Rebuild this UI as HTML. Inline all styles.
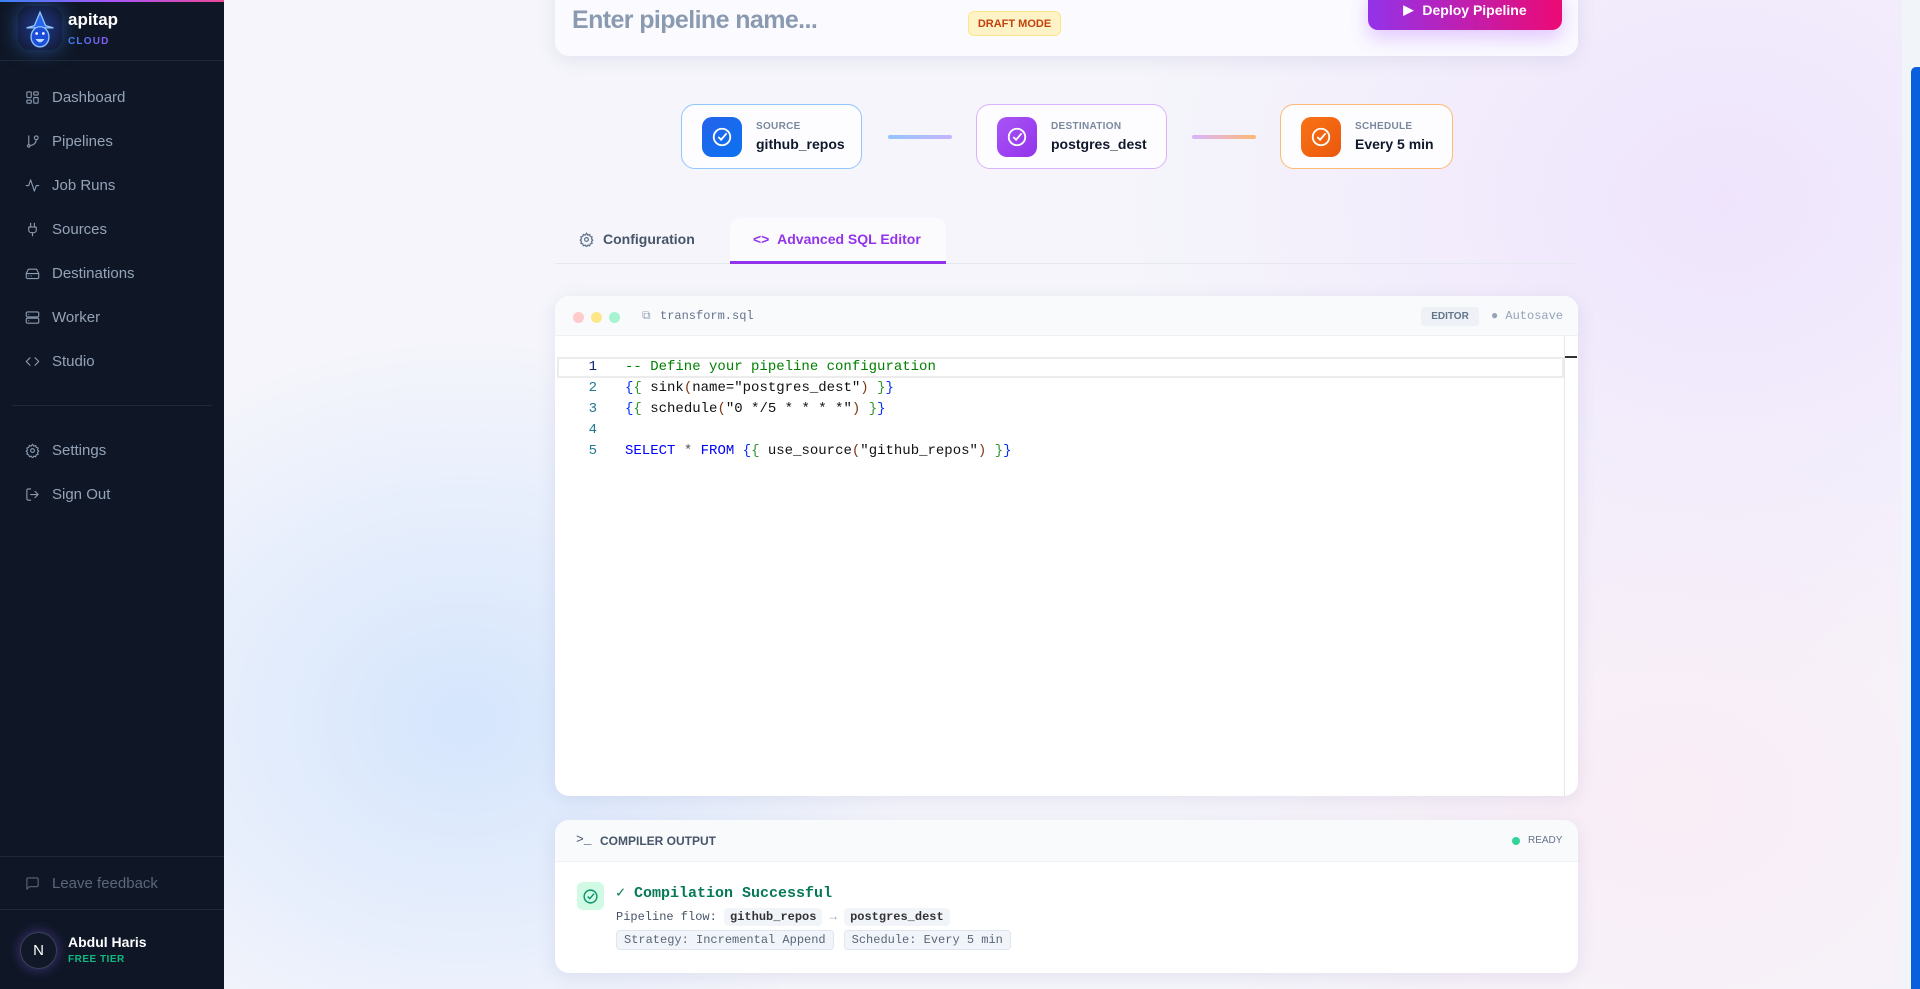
<!DOCTYPE html>
<html><head><meta charset="utf-8"><style>
*{box-sizing:border-box;margin:0;padding:0}
body{width:1920px;height:989px;overflow:hidden;font-family:"Liberation Sans",sans-serif;background:#f4f4fb;position:relative}
.sb{position:absolute;left:0;top:0;width:224px;height:989px;background:#0f1726;color:#8d9bb0}
.sb .topbar{position:absolute;left:0;top:0;width:224px;height:2px;background:linear-gradient(90deg,#3b82f6,#a855f7,#ec4899)}
.nav{position:absolute;left:25px;font-size:15px;color:#94a3b8;display:flex;align-items:center;height:20px}
.nav svg{width:15px;height:15px;margin-right:12px;stroke:#8d9bb0;fill:none;stroke-width:1.8;stroke-linecap:round;stroke-linejoin:round}
.main{position:absolute;left:224px;top:0;width:1678px;height:989px;background:radial-gradient(ellipse 450px 380px at 240px 720px,rgba(191,219,254,.6),transparent),radial-gradient(ellipse 600px 500px at 1500px 200px,rgba(237,224,252,.8),transparent),radial-gradient(ellipse 500px 400px at 1450px 800px,rgba(252,231,243,.6),transparent),#f5f5fb}
.card{position:absolute;background:#fff;border-radius:14px;box-shadow:0 4px 18px rgba(100,100,160,.12)}
.node{position:absolute;top:104px;height:65px;border-radius:14px;background:#fdfdff;display:flex;align-items:center;padding-left:20px}
.node .ic{width:40px;height:40px;border-radius:10px;display:flex;align-items:center;justify-content:center;margin-right:14px}
.node .l{font-size:10px;font-weight:bold;color:#7a889e;letter-spacing:.3px}
.node .v{font-size:14px;font-weight:bold;color:#0f172a;margin-top:4px}
.mono{font-family:"Liberation Mono",monospace}
.code{position:absolute;left:625px;font-size:14px;white-space:pre;color:#111}
.ln{position:absolute;left:560px;width:37px;text-align:right;font-size:14px;color:#237893}
.chip{display:inline-block;background:#f1f5f9;border-radius:4px;padding:2px 6px;font-weight:bold;color:#333}
.chip2{display:inline-block;background:#f1f5f9;border:1px solid #dfe5ee;border-radius:4px;padding:2px 7px;color:#5a6678;margin-right:10px}
</style></head><body>
<div class="sb">
<div class="topbar"></div>
<div style="position:absolute;left:18px;top:6px;width:44px;height:44px;border-radius:12px;background:radial-gradient(circle,#1e3a8a 0%,#172554 60%,#0f1726 100%);box-shadow:0 0 18px rgba(59,130,246,.5)"></div>
<svg style="position:absolute;left:22px;top:10px" width="36" height="38" viewBox="0 0 32 34"><path d="M16 2 L21 14 L28 16 L4 16 L11 14 Z" fill="#2563eb" stroke="#93c5fd" stroke-width="1.2"/><ellipse cx="16" cy="24" rx="8" ry="9" fill="#1d4ed8" stroke="#93c5fd" stroke-width="1.2"/><circle cx="13" cy="21" r="1.2" fill="#fff"/><circle cx="19" cy="21" r="1.2" fill="#fff"/><path d="M12 26 Q16 32 20 26" fill="#bfdbfe"/></svg>
<div style="position:absolute;left:68px;top:10px;color:#fff;font-weight:bold;font-size:17px">apitap</div>
<div style="position:absolute;left:68px;top:36px;font-weight:bold;font-size:10px;letter-spacing:1.2px;background:linear-gradient(90deg,#3b82f6,#8b5cf6);-webkit-background-clip:text;color:transparent">CLOUD</div>
<div style="position:absolute;left:0;top:60px;width:224px;height:1px;background:#1e293b"></div>
<div class="nav" style="top:87px"><svg viewBox="0 0 24 24"><rect x="3" y="3" width="7" height="9" rx="1"/><rect x="14" y="3" width="7" height="5" rx="1"/><rect x="14" y="12" width="7" height="9" rx="1"/><rect x="3" y="16" width="7" height="5" rx="1"/></svg>Dashboard</div>
<div class="nav" style="top:131px"><svg viewBox="0 0 24 24"><circle cx="6" cy="19" r="2"/><circle cx="18" cy="6" r="3"/><path d="M6 3v14M18 9a9 9 0 0 1-9 9"/></svg>Pipelines</div>
<div class="nav" style="top:175px"><svg viewBox="0 0 24 24"><path d="M22 12h-4l-3 9L9 3l-3 9H2"/></svg>Job Runs</div>
<div class="nav" style="top:219px"><svg viewBox="0 0 24 24"><path d="M12 22v-5M9 8V2M15 8V2M18 8v5a4 4 0 0 1-4 4h-4a4 4 0 0 1-4-4V8z"/></svg>Sources</div>
<div class="nav" style="top:263px"><svg viewBox="0 0 24 24"><path d="M22 12H2M5.5 5h13L22 12v6a2 2 0 0 1-2 2H4a2 2 0 0 1-2-2v-6z"/><path d="M6 16h.01M10 16h.01"/></svg>Destinations</div>
<div class="nav" style="top:307px"><svg viewBox="0 0 24 24"><rect x="2" y="3" width="20" height="8" rx="2"/><rect x="2" y="13" width="20" height="8" rx="2"/><path d="M6 7h.01M6 17h.01"/></svg>Worker</div>
<div class="nav" style="top:351px"><svg viewBox="0 0 24 24"><path d="M16 18l6-6-6-6M8 6l-6 6 6 6"/></svg>Studio</div>
<div style="position:absolute;left:12px;top:405px;width:200px;height:1px;background:#1e293b"></div>
<div class="nav" style="top:440px"><svg viewBox="0 0 24 24"><circle cx="12" cy="12" r="3"/><path d="M12 2l2 3 3-1 1 3 3 1-1 3 2 2-2 2 1 3-3 1-1 3-3-1-2 3-2-3-3 1-1-3-3-1 1-3-2-2 2-2-1-3 3-1 1-3 3 1z"/></svg>Settings</div>
<div class="nav" style="top:484px"><svg viewBox="0 0 24 24"><path d="M9 21H5a2 2 0 0 1-2-2V5a2 2 0 0 1 2-2h4M16 17l5-5-5-5M21 12H9"/></svg>Sign Out</div>
<div style="position:absolute;left:0;top:856px;width:224px;height:1px;background:#1e293b"></div>
<div class="nav" style="top:873px;color:#5b6678"><svg viewBox="0 0 24 24" style="stroke:#5b6678"><path d="M21 15a2 2 0 0 1-2 2H7l-4 4V5a2 2 0 0 1 2-2h14a2 2 0 0 1 2 2z"/></svg>Leave feedback</div>
<div style="position:absolute;left:0;top:909px;width:224px;height:1px;background:#1e293b"></div>
<div style="position:absolute;left:20px;top:932px;width:37px;height:37px;border-radius:50%;background:#111827;border:1px solid #374151;box-shadow:0 0 12px rgba(139,92,246,.45);color:#fff;font-size:15px;display:flex;align-items:center;justify-content:center">N</div>
<div style="position:absolute;left:68px;top:934px;color:#fff;font-weight:bold;font-size:14px">Abdul Haris</div>
<div style="position:absolute;left:68px;top:954px;color:#10b981;font-weight:bold;font-size:10px;letter-spacing:.5px">FREE TIER</div>
</div>
<div class="main"></div>
<div style="position:absolute;left:1902px;top:0;width:18px;height:989px;background:#f1f4f8"></div>
<div style="position:absolute;left:1911px;top:67px;width:9px;height:922px;background:#0a5fdc;border-radius:5px 0 0 0"></div>

<div class="card" style="left:555px;top:-20px;width:1023px;height:76px;background:rgba(252,252,255,.85)"></div>
<div style="position:absolute;left:572px;top:6px;font-size:25px;font-weight:bold;color:#8a9ab0;letter-spacing:-.6px">Enter pipeline name...</div>
<div style="position:absolute;left:968px;top:11px;width:93px;height:25px;border-radius:6px;background:#fef3c7;border:1px solid #fde68a;color:#c2410c;font-size:11px;font-weight:bold;display:flex;align-items:center;justify-content:center">DRAFT MODE</div>
<div style="position:absolute;left:1368px;top:-10px;width:194px;height:40px;border-radius:10px;background:linear-gradient(90deg,#9333ea,#ec0a74);box-shadow:0 8px 18px rgba(168,85,247,.3);color:#fff;font-weight:bold;font-size:14px;display:flex;align-items:center;justify-content:center;padding-top:0"><span style="font-size:13px;margin-right:9px">&#9654;</span>Deploy Pipeline</div>

<div class="node" style="left:681px;width:181px;border:1px solid #93c5fd"><div class="ic" style="background:linear-gradient(135deg,#2563eb,#0b72f0)"><svg width="22" height="22" viewBox="0 0 24 24" fill="none" stroke="#fff" stroke-width="2"><circle cx="12" cy="12" r="9"/><path d="M8 12l3 3 6-7"/></svg></div><div><div class="l">SOURCE</div><div class="v">github_repos</div></div></div>
<div style="position:absolute;left:888px;top:135px;width:64px;height:4px;border-radius:2px;background:linear-gradient(90deg,#93c5fd,#c4b5fd)"></div>
<div class="node" style="left:976px;width:191px;border:1px solid #d8b4fe"><div class="ic" style="background:linear-gradient(135deg,#a855f7,#9333ea)"><svg width="22" height="22" viewBox="0 0 24 24" fill="none" stroke="#fff" stroke-width="2"><circle cx="12" cy="12" r="9"/><path d="M8 12l3 3 6-7"/></svg></div><div><div class="l">DESTINATION</div><div class="v">postgres_dest</div></div></div>
<div style="position:absolute;left:1192px;top:135px;width:64px;height:4px;border-radius:2px;background:linear-gradient(90deg,#d8b4fe,#fdba74)"></div>
<div class="node" style="left:1280px;width:173px;border:1px solid #fdba74"><div class="ic" style="background:linear-gradient(135deg,#f97316,#ea580c)"><svg width="22" height="22" viewBox="0 0 24 24" fill="none" stroke="#fff" stroke-width="2"><circle cx="12" cy="12" r="9"/><path d="M8 12l3 3 6-7"/></svg></div><div><div class="l">SCHEDULE</div><div class="v">Every 5 min</div></div></div>

<div style="position:absolute;left:555px;top:263px;width:1023px;height:1px;background:#e6e8f0"></div>
<svg style="position:absolute;left:579px;top:232px" width="15" height="15" viewBox="0 0 24 24" fill="none" stroke="#64748b" stroke-width="2"><circle cx="12" cy="12" r="3"/><path d="M12 2l2 3 3-1 1 3 3 1-1 3 2 2-2 2 1 3-3 1-1 3-3-1-2 3-2-3-3 1-1-3-3-1 1-3-2-2 2-2-1-3 3-1 1-3 3 1z"/></svg>
<div style="position:absolute;left:603px;top:231px;font-size:14px;font-weight:bold;color:#475569">Configuration</div>
<div style="position:absolute;left:730px;top:218px;width:216px;height:46px;background:rgba(255,255,255,.6);border-radius:10px 10px 0 0;border-bottom:3px solid #9333ea"></div>
<div style="position:absolute;left:753px;top:231px;font-size:14px;font-weight:bold;color:#9333ea">&lt;&gt;&nbsp;&nbsp;Advanced SQL Editor</div>

<div class="card" style="left:555px;top:296px;width:1023px;height:500px;overflow:hidden">
<div style="height:40px;background:#f8fafc;border-bottom:1px solid #eef1f5;position:relative">
<span style="position:absolute;left:18px;top:16px;width:11px;height:11px;border-radius:50%;background:#fecaca"></span>
<span style="position:absolute;left:36px;top:16px;width:11px;height:11px;border-radius:50%;background:#fde68a"></span>
<span style="position:absolute;left:54px;top:16px;width:11px;height:11px;border-radius:50%;background:#a7f3d0"></span>
<span class="mono" style="position:absolute;left:87px;top:13px;font-size:12px;color:#94a3b8">&#10697;</span>
<span class="mono" style="position:absolute;left:105px;top:13px;font-size:12px;color:#64748b">transform.sql</span>
<span style="position:absolute;left:866px;top:11px;width:58px;height:19px;background:#eef2f6;border-radius:3px;font-size:10px;font-weight:bold;color:#64748b;display:flex;align-items:center;justify-content:center">EDITOR</span>
<span class="mono" style="position:absolute;left:936px;top:13px;font-size:12px;color:#94a3b8">&#9679; Autosave</span>
</div>
<div style="position:absolute;left:2px;top:61px;width:1007px;height:21px;border:2px solid #ececec"></div>
<div style="position:absolute;left:1009px;top:40px;width:1px;height:460px;background:#e5e7eb"></div>
<div style="position:absolute;left:1010px;top:60px;width:12px;height:2px;background:#333"></div>
</div>
<div class="ln mono" style="top:359px;color:#0b216f">1</div>
<div class="ln mono" style="top:380px">2</div>
<div class="ln mono" style="top:401px">3</div>
<div class="ln mono" style="top:422px">4</div>
<div class="ln mono" style="top:443px">5</div>
<div class="code mono" style="top:359px;color:#008000">-- Define your pipeline configuration</div>
<div class="code mono" style="top:380px"><span style="color:#0431fa">{</span><span style="color:#319331">{</span> sink<span style="color:#7b3814">(</span>name=<span>"postgres_dest"</span><span style="color:#7b3814">)</span> <span style="color:#319331">}</span><span style="color:#0431fa">}</span></div>
<div class="code mono" style="top:401px"><span style="color:#0431fa">{</span><span style="color:#319331">{</span> schedule<span style="color:#7b3814">(</span>"0 */5 * * * *"<span style="color:#7b3814">)</span> <span style="color:#319331">}</span><span style="color:#0431fa">}</span></div>
<div class="code mono" style="top:443px"><span style="color:#0000ff">SELECT</span> <span style="color:#555">*</span> <span style="color:#0000ff">FROM</span> <span style="color:#0431fa">{</span><span style="color:#319331">{</span> use_source<span style="color:#7b3814">(</span>"github_repos"<span style="color:#7b3814">)</span> <span style="color:#319331">}</span><span style="color:#0431fa">}</span></div>

<div class="card" style="left:555px;top:820px;width:1023px;height:153px;overflow:hidden">
<div style="height:42px;background:#f8fafc;border-bottom:1px solid #eef1f5;position:relative">
<span class="mono" style="position:absolute;left:21px;top:12px;font-size:13px;color:#475569">&gt;_</span>
<span style="position:absolute;left:45px;top:14px;font-size:12px;font-weight:bold;color:#475569">COMPILER OUTPUT</span>
<span style="position:absolute;left:957px;top:17px;width:8px;height:8px;border-radius:50%;background:#34d399"></span>
<span style="position:absolute;left:973px;top:15px;font-size:10px;color:#64748b">READY</span>
</div>
<div style="position:absolute;left:22px;top:62px;width:27px;height:28px;border-radius:6px;background:#d1fae5;display:flex;align-items:center;justify-content:center"><svg width="17" height="17" viewBox="0 0 24 24" fill="none" stroke="#059669" stroke-width="2"><circle cx="12" cy="12" r="9"/><path d="M8 12l3 3 6-7"/></svg></div>
<div class="mono" style="position:absolute;left:61px;top:63px;font-size:15px;font-weight:bold;color:#047857">&#10003; Compilation Successful</div>
<div class="mono" style="position:absolute;left:61px;top:88px;font-size:12px;color:#475569">Pipeline flow: <span class="chip">github_repos</span> <span style="color:#94a3b8">&#8594;</span> <span class="chip">postgres_dest</span></div>
<div class="mono" style="position:absolute;left:61px;top:110px;font-size:12px"><span class="chip2">Strategy: Incremental Append</span><span class="chip2">Schedule: Every 5 min</span></div>
</div>
</body></html>
